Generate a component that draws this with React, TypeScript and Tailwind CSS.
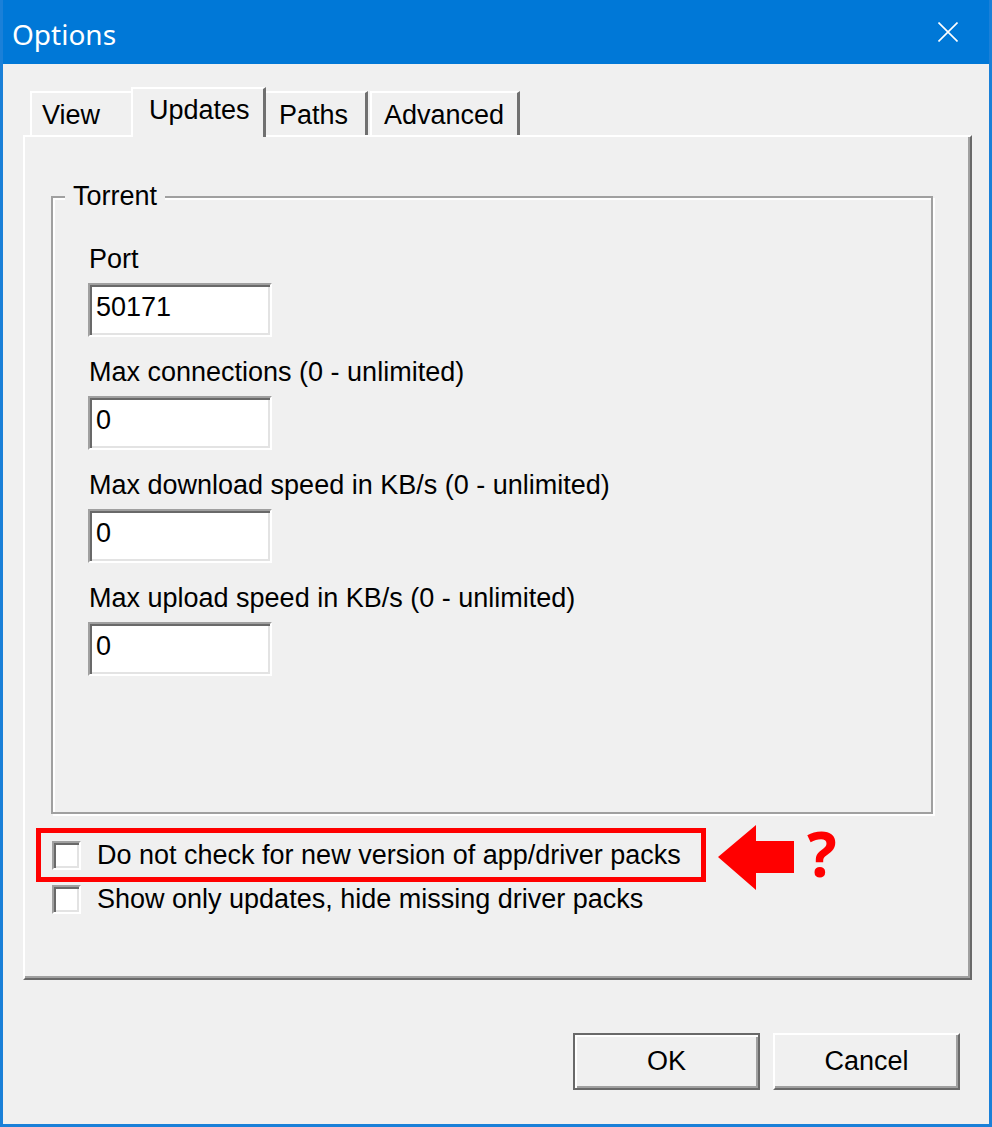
import React from 'react';

const Field: React.FC<{ label: string; value: string }> = ({ label, value }) => (
  <div className="mb-[20px]">
    <div className="h-[31px] pl-[1px] leading-[31px]">{label}</div>
    <div className="mt-[8px] flex h-[54px] w-[184px] items-center border-2 border-t-[#a0a0a0] border-l-[#a0a0a0] border-b-white border-r-white bg-white pb-[6px] pl-[6px] shadow-[inset_2px_2px_0_#696969,inset_-2px_-2px_0_#e3e3e3]">
      {value}
    </div>
  </div>
);

const CheckRow: React.FC<{ label: string; children?: React.ReactNode }> = ({ label, children }) => (
  <div className="relative flex h-[44px] items-center gap-[16px]">
    <div className="h-[29px] w-[29px] border-2 border-t-[#a0a0a0] border-l-[#a0a0a0] border-b-white border-r-white bg-white shadow-[inset_2px_2px_0_#696969,inset_-2px_-2px_0_#e3e3e3]" />
    <span className="leading-[31px]">{label}</span>
    {children}
  </div>
);

export default function App() {
  return (
    <div className="flex h-[1127px] w-[992px] flex-col border-x-[3px] border-b-[3px] border-[#1a80d8] bg-[#f0f0f0] font-['Liberation_Sans',Arial,sans-serif] text-[27px] text-black">
      {/* Title bar */}
      <div className="flex h-[64px] shrink-0 items-center justify-between bg-[#0078d7] pl-[9px] pr-[31px]">
        <span className="pt-[4px] font-['Noto_Sans',sans-serif] text-[28px] text-white">Options</span>
        <svg width="20" height="20" viewBox="0 0 20 20">
          <path d="M0.5 0.5 L19.5 19.5 M19.5 0.5 L0.5 19.5" stroke="#fff" strokeWidth="1.6" />
        </svg>
      </div>

      {/* Tabs */}
      <div className="ml-[20px] mt-[23px]">
        <div className="flex h-[48px] items-end pl-[7px]">
          <div className="h-[44px] w-[101px] border-l-2 border-t-2 border-white pl-[10px] pt-[7px] leading-[31px]">View</div>
          <div className="relative z-10 -mb-[2px] h-[50px] w-[135px] border-l-2 border-r-[3px] border-t-2 border-l-white border-t-white border-r-[#707070] bg-[#f0f0f0] pl-[16px] pt-[6px] leading-[31px]">
            Updates
          </div>
          <div className="h-[44px] w-[102px] border-r-[3px] border-t-2 border-t-white border-r-[#707070] pl-[13px] pt-[7px] leading-[31px]">Paths</div>
          <div className="ml-[2px] h-[44px] w-[150px] border-l-2 border-r-[3px] border-t-2 border-l-white border-t-white border-r-[#707070] pl-[12px] pt-[7px] leading-[31px]">
            Advanced
          </div>
        </div>

        {/* Tab panel */}
        <div className="h-[845px] w-[949px] border-2 border-t-white border-l-white border-r-[#696969] border-b-[#696969] shadow-[inset_-2px_-2px_0_#a0a0a0]">
          <fieldset className="ml-[26px] mt-[44px] h-[633px] w-[882px] min-w-0 border-2 border-[#a0a0a0] p-0 shadow-[inset_2px_2px_0_#fff,2px_2px_0_#fff]">
            <legend className="ml-[12px] bg-[#f0f0f0] px-[8px] leading-[31px]">Torrent</legend>
            <div className="pl-[35px] pt-[32px]">
              <Field label="Port" value="50171" />
              <Field label="Max connections (0 - unlimited)" value="0" />
              <Field label="Max download speed in KB/s (0 - unlimited)" value="0" />
              <Field label="Max upload speed in KB/s (0 - unlimited)" value="0" />
            </div>
          </fieldset>

          <div className="ml-[27px] mt-[19px]">
            <CheckRow label="Do not check for new version of app/driver packs">
              <div className="absolute left-[-16px] top-[-5px] h-[54px] w-[670px] border-[5px] border-[#ff0000]" />
              <svg className="absolute left-[666px] top-[-8px]" width="76" height="65" viewBox="0 0 76 65">
                <polygon points="0,32 38,0 38,16 76,16 76,48 38,48 38,65" fill="#ff0000" />
              </svg>
              <span className="absolute left-[755px] top-[-11px] font-['Noto_Sans',sans-serif] text-[62px] font-bold leading-[62px] text-[#f00]">?</span>
            </CheckRow>
            <CheckRow label="Show only updates, hide missing driver packs" />
          </div>
        </div>
      </div>

      {/* Buttons */}
      <div className="mt-[53px] flex justify-end gap-[13px] pr-[29px]">
        <button className="flex h-[57px] w-[187px] items-center justify-center border-2 border-[#696969] shadow-[inset_2px_2px_0_#fff,inset_-2px_-2px_0_#a0a0a0]">
          OK
        </button>
        <button className="flex h-[57px] w-[187px] items-center justify-center border-2 border-t-white border-l-white border-r-[#696969] border-b-[#696969] shadow-[inset_-2px_-2px_0_#a0a0a0]">
          Cancel
        </button>
      </div>
    </div>
  );
}
